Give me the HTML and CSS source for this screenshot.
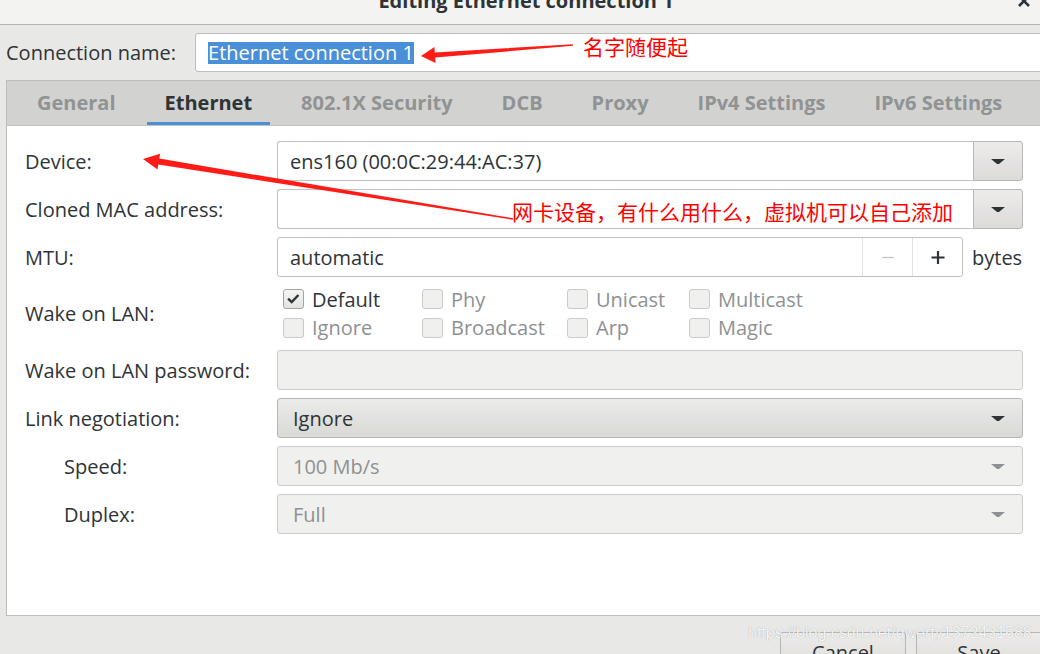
FILE: index.html
```html
<!DOCTYPE html>
<html lang="en">
<head>
  <meta charset="UTF-8">
  <title>Editing Ethernet connection 1</title>
  <link rel="stylesheet" href="styles.css">
</head>
<body>
  <div class="dialog">
    <header class="titlebar">
      <span class="title">Editing Ethernet connection 1</span>
      <svg class="close" viewBox="0 0 14 14" width="14" height="14"><path d="M2 2L12 12M12 2L2 12" stroke="#2e3436" stroke-width="2.6" fill="none"/></svg>
    </header>

    <div class="name-row">
      <label>Connection name:</label>
      <div class="entry"><span class="sel">Ethernet connection 1</span></div>
    </div>

    <div class="notebook">
      <div class="tabs">
        <span class="tab">General</span>
        <span class="tab active">Ethernet</span>
        <span class="tab">802.1X Security</span>
        <span class="tab">DCB</span>
        <span class="tab">Proxy</span>
        <span class="tab">IPv4 Settings</span>
        <span class="tab">IPv6 Settings</span>
      </div>

      <div class="page">
        <div class="form">
          <div class="label">Device:</div>
          <div class="combo">
            <div class="combo-entry">ens160 (00:0C:29:44:AC:37)</div>
            <div class="combo-btn"><svg viewBox="0 0 16 16" width="16" height="16"><polygon points="1,6 15,6 9,11 7,11" fill="#2e3436"/></svg></div>
          </div>

          <div class="label">Cloned MAC address:</div>
          <div class="combo">
            <div class="combo-entry"></div>
            <div class="combo-btn"><svg viewBox="0 0 16 16" width="16" height="16"><polygon points="1,6 15,6 9,11 7,11" fill="#2e3436"/></svg></div>
          </div>

          <div class="label">MTU:</div>
          <div class="mtu">
            <div class="spin">
              <div class="spin-text">automatic</div>
              <div class="spin-btn"><svg viewBox="0 0 16 16" width="16" height="16"><path d="M2 8.5H14" stroke="#c9c9c7" stroke-width="1.4"/></svg></div>
              <div class="spin-btn"><svg viewBox="0 0 16 16" width="16" height="16"><path d="M1.5 8.5H14.5M8 2V15" stroke="#2e3436" stroke-width="2.2"/></svg></div>
            </div>
            <span class="unit">bytes</span>
          </div>

          <div class="label">Wake on LAN:</div>
          <div class="checks">
            <div class="check on"><span class="box"><svg viewBox="0 0 21 20" width="19" height="18"><path d="M4.5 9.5L8.5 13.5L16 5.5" stroke="#2e3436" stroke-width="2.6" fill="none"/></svg></span>Default</div>
            <div class="check"><span class="box"></span>Phy</div>
            <div class="check"><span class="box"></span>Unicast</div>
            <div class="check"><span class="box"></span>Multicast</div>
            <div class="check"><span class="box"></span>Ignore</div>
            <div class="check"><span class="box"></span>Broadcast</div>
            <div class="check"><span class="box"></span>Arp</div>
            <div class="check"><span class="box"></span>Magic</div>
          </div>

          <div class="label">Wake on LAN password:</div>
          <div class="entry-off"></div>

          <div class="label">Link negotiation:</div>
          <div class="dropdown">
            <span>Ignore</span>
            <svg viewBox="0 0 16 16" width="16" height="16"><polygon points="1,6 15,6 9,11 7,11" fill="#2e3436"/></svg>
          </div>

          <div class="label sub">Speed:</div>
          <div class="dropdown off">
            <span>100 Mb/s</span>
            <svg viewBox="0 0 16 16" width="16" height="16"><polygon points="1,6 15,6 9,11 7,11" fill="#8e9192"/></svg>
          </div>

          <div class="label sub">Duplex:</div>
          <div class="dropdown off">
            <span>Full</span>
            <svg viewBox="0 0 16 16" width="16" height="16"><polygon points="1,6 15,6 9,11 7,11" fill="#8e9192"/></svg>
          </div>
        </div>
      </div>
    </div>

    <div class="actions">
      <button class="btn">Cancel</button>
      <button class="btn">Save</button>
    </div>
  </div>

  <!-- red notes drawn on top of the screenshot -->
  <div class="notes">
    <svg class="arrows" viewBox="0 0 1040 654" width="1040" height="654">
      <polygon points="421,56 434.4,47 434.8,52.5 572.9,44.2 573.1,45.8 435.2,57.5 435.6,63" fill="#ff1c16"/>
      <polygon points="143,159 160.1,153.7 159.3,158.6 513.1,218.2 512.9,219.8 158.3,164.6 157.5,169.5" fill="#ff1c16"/>
    </svg>
    <span class="note note-name">名字随便起</span>
    <span class="note note-device">网卡设备，有什么用什么，虚拟机可以自己添加</span>
    <span class="watermark">https://blog.csdn.net/qwerty1372431588</span>
  </div>
</body>
</html>
```

FILE: styles.css
```css
* {
  box-sizing: border-box;
}
body {
  margin: 0;
  width: 1040px;
  height: 654px;
  overflow: hidden;
  position: relative;
  background: #e8e8e7;
  font-family: "Open Sans", "Noto Sans", sans-serif;
  font-size: 20px;
  color: #2e3436;
}
.dialog {
  width: 1052px;
}
.titlebar {
  height: 25px;
  background: #f3f3f2;
  border-bottom: 1px solid #b4b4b1;
  display: grid;
  grid-template-columns: 1fr auto 1fr;
  overflow: hidden;
}
.title {
  grid-column: 2;
  font-weight: bold;
  line-height: 20px;
  margin-top: -9.5px;
}
.close {
  grid-column: 3;
  justify-self: end;
  margin-right: 21px;
  margin-top: -6px;
}
.name-row {
  display: flex;
  align-items: center;
  gap: 19px;
  padding: 8px 6px;
}
.entry {
  flex: 1;
  height: 39px;
  display: flex;
  align-items: center;
  padding-left: 12px;
  background: #fff;
  border: 1px solid #bdbdba;
  border-radius: 3px;
}
.sel {
  background: #4a90d9;
  color: #fff;
  line-height: 22px;
}
.notebook {
  margin: 0 6px;
  border: 1px solid #bdbdba;
  background: #fff;
}
.tabs {
  display: flex;
  gap: 13px;
  height: 45px;
  padding-left: 12px;
  background: #d2d2d0;
  border-bottom: 1px solid #c2c2bf;
}
.tab {
  padding: 0 18px;
  line-height: 44px;
  font-weight: bold;
  color: #909393;
}
.tab.active {
  color: #2e3436;
  box-shadow: inset 0 -3px #4a90d9;
}
.page {
  height: 489px;
  padding: 15px 0 0 18px;
}
.form {
  display: grid;
  grid-template-columns: 252px 746px;
  grid-template-rows: 40px 40px 40px 57px 40px 40px 40px 40px;
  row-gap: 8px;
  align-items: center;
}
.label.sub {
  padding-left: 39px;
}
.combo {
  display: flex;
  height: 40px;
}
.combo-entry {
  flex: 1;
  display: flex;
  align-items: center;
  padding-left: 12px;
  background: #fff;
  border: 1px solid #c0c0bd;
  border-right: 0;
  border-radius: 3px 0 0 3px;
}
.combo-btn {
  width: 50px;
  display: flex;
  align-items: center;
  justify-content: center;
  border: 1px solid #b6b6b3;
  border-radius: 0 3px 3px 0;
  background: linear-gradient(#edecea, #dcdbd8);
}
.mtu {
  display: flex;
  align-items: center;
  height: 40px;
}
.spin {
  display: flex;
  width: 686px;
  height: 40px;
  background: #fff;
  border: 1px solid #c0c0bd;
  border-radius: 3px;
}
.spin-text {
  flex: 1;
  display: flex;
  align-items: center;
  padding-left: 12px;
}
.spin-btn {
  width: 50px;
  display: flex;
  align-items: center;
  justify-content: center;
  border-left: 1px solid #e2e2e0;
}
.unit {
  margin-left: 9px;
}
.checks {
  display: grid;
  grid-template-columns: 139px 145px 122px auto;
  grid-template-rows: 28px 29px;
  align-items: center;
  height: 57px;
  padding-left: 6px;
}
.check {
  display: flex;
  align-items: center;
  gap: 8px;
  color: #8e9192;
}
.check.on {
  color: #2e3436;
}
.box {
  width: 21px;
  height: 20px;
  display: flex;
  align-items: center;
  justify-content: center;
  background: #f0f0ef;
  border: 1px solid #cbcbc9;
  border-radius: 3px;
}
.check.on .box {
  background: linear-gradient(#f5f5f4, #e3e3e1);
  border-color: #a3a3a0;
}
.entry-off {
  height: 40px;
  background: #f0f0ef;
  border: 1px solid #cbcbc9;
  border-radius: 3px;
}
.dropdown {
  height: 40px;
  display: flex;
  align-items: center;
  justify-content: space-between;
  padding: 0 16px 0 15px;
  background: linear-gradient(#ebebea, #d9d9d6);
  border: 1px solid #b6b6b3;
  border-radius: 3px;
}
.dropdown.off {
  background: #f0f0ef;
  border-color: #cbcbc9;
  color: #8e9192;
}
.actions {
  display: flex;
  justify-content: flex-end;
  gap: 10px;
  padding: 16px 10px 0 0;
}
.btn {
  width: 126px;
  height: 40px;
  font: inherit;
  color: #2e3436;
  background: linear-gradient(#edecea, #dcdbd8);
  border: 1px solid #b6b6b3;
  border-radius: 3px;
}
.notes {
  position: absolute;
  left: 0;
  top: 0;
  width: 1040px;
  height: 654px;
  pointer-events: none;
}
.arrows {
  position: absolute;
  left: 0;
  top: 0;
}
.note {
  position: absolute;
  font-family: "Noto Sans CJK SC", sans-serif;
  font-size: 21px;
  line-height: 21px;
  color: #ff0000;
  white-space: nowrap;
}
.note-name {
  left: 583px;
  top: 36px;
}
.note-device {
  left: 512px;
  top: 201px;
}
.watermark {
  position: absolute;
  left: 748px;
  top: 625px;
  font-family: "Liberation Sans", Arial, sans-serif;
  font-size: 16px;
  line-height: 16px;
  color: rgba(255, 255, 255, 0.92);
  text-shadow: 0 0 1px rgba(0, 0, 0, 0.35);
  white-space: nowrap;
}
```
